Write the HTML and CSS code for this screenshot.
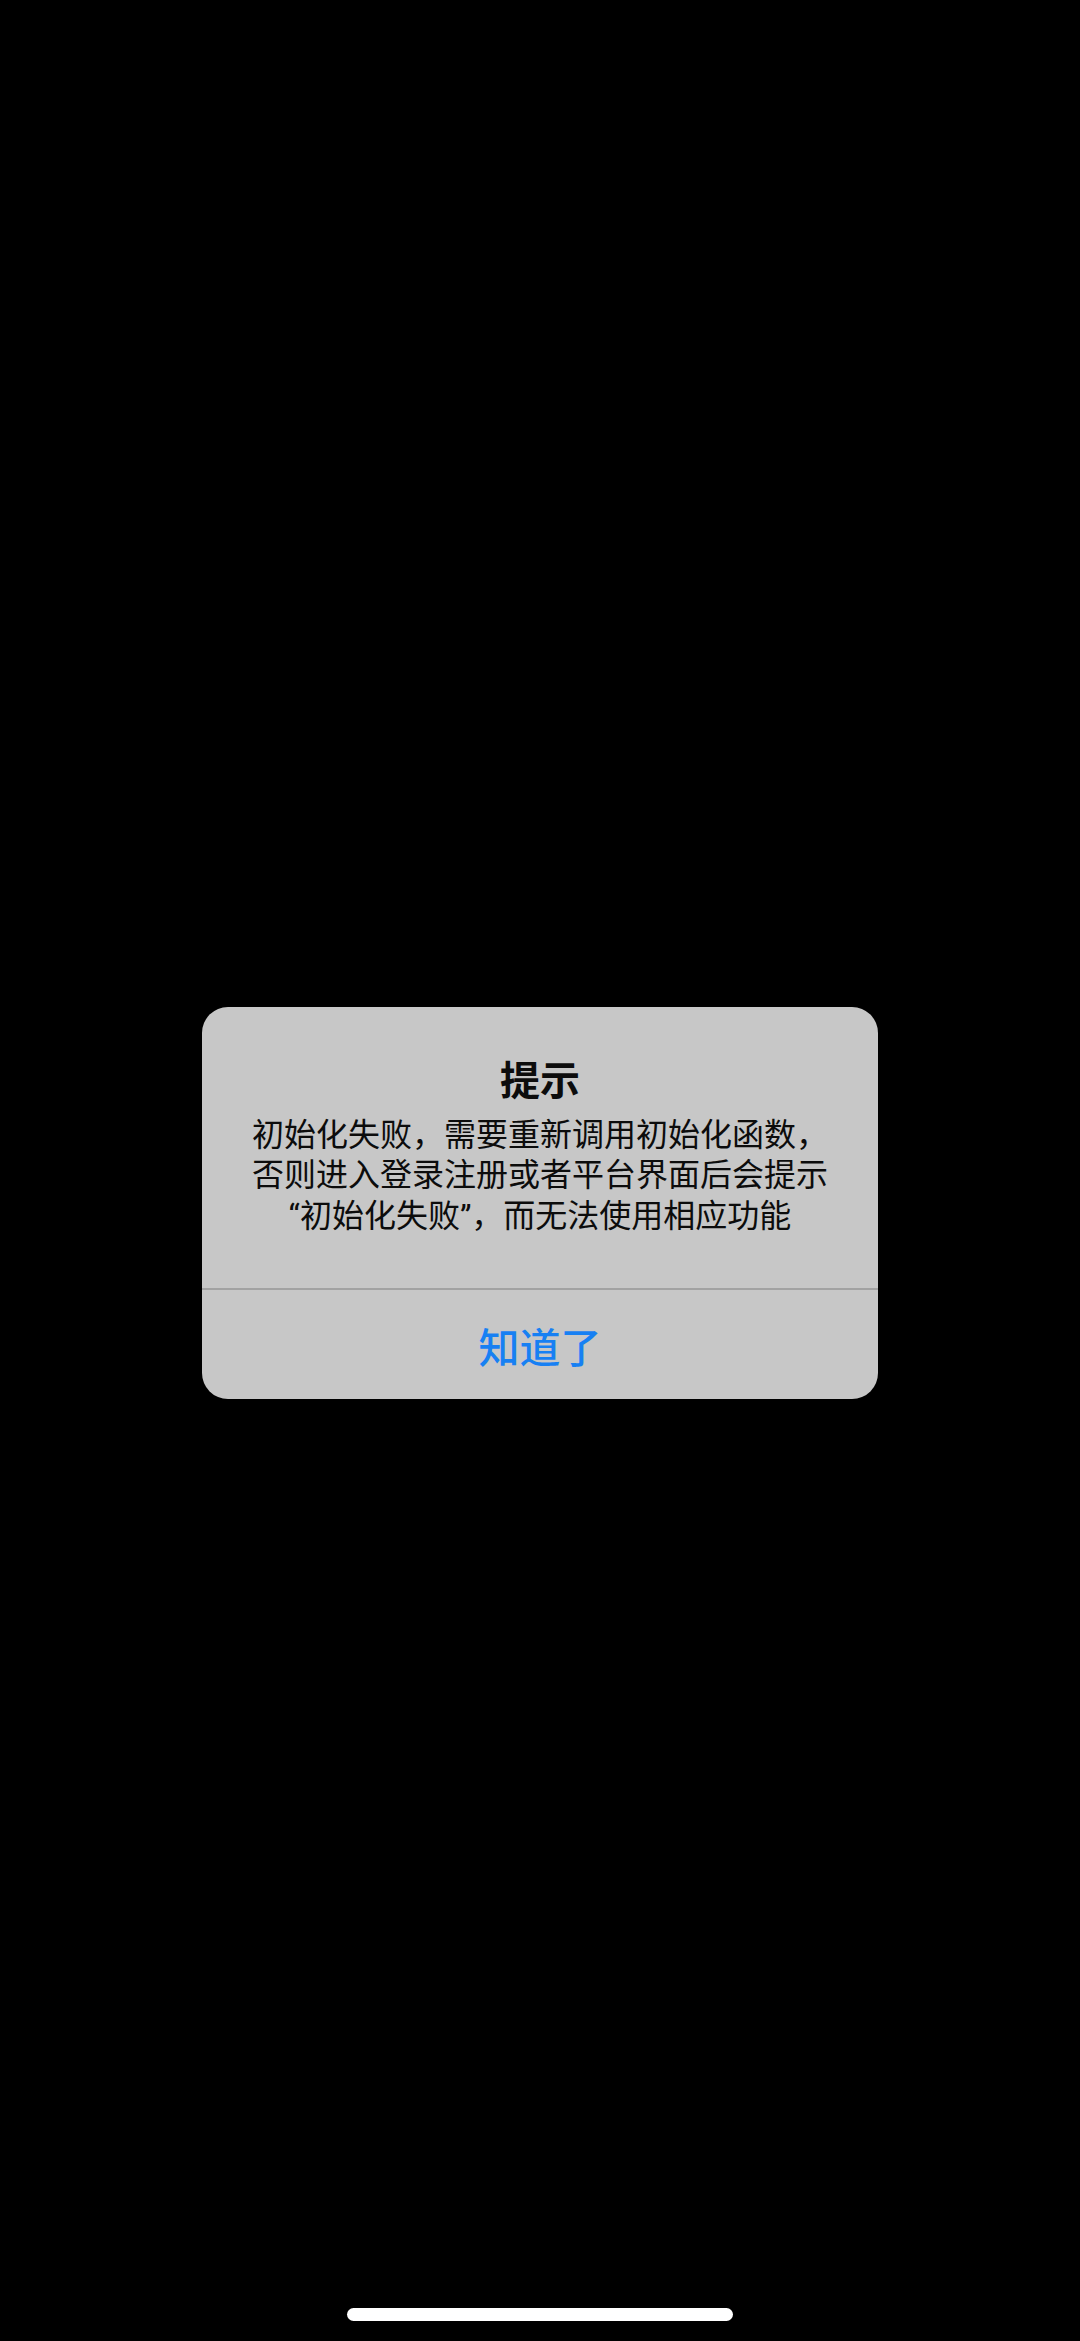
FILE: index.html
```html
<!DOCTYPE html>
<html lang="zh-CN">
<head>
    <meta charset="UTF-8">
    <meta name="viewport" content="width=device-width, initial-scale=1.0">
    <title>提示</title>
    <link rel="stylesheet" href="styles.css">
</head>
<body>
    <div class="screen">
        <div class="alert">
            <div class="alert-body">
                <h2 class="alert-title">提示</h2>
                <p class="alert-message">初始化失败，需要重新调用初始化函数，否则进入登录注册或者平台界面后会提示“初始化失败”，而无法使用相应功能</p>
            </div>
            <button class="alert-button" type="button">知道了</button>
        </div>
        <div class="home-indicator"></div>
    </div>
</body>
</html>
```

FILE: styles.css
```css
:root {
    --screen-bg: #000000;
    --alert-bg: #c7c7c7;
    --alert-line: #a2a2a2;
    --text-color: #0c0c0c;
    --accent-color: #1780f3;
}

* {
    margin: 0;
    padding: 0;
    box-sizing: border-box;
}

body {
    font-family: Roboto, "Noto Sans CJK SC", sans-serif;
    background: var(--screen-bg);
    color: var(--text-color);
    text-spacing-trim: space-all;
}

.screen {
    position: relative;
    min-height: 100vh;
    display: flex;
    justify-content: center;
    align-items: center;
    padding-top: 65px;
}

.alert {
    width: 676px;
    background: var(--alert-bg);
    border-radius: 26px;
    overflow: hidden;
    text-align: center;
}

.alert-body {
    padding: 51px 40px 52px;
    border-bottom: 2px solid var(--alert-line);
}

.alert-title {
    font-size: 40px;
    line-height: 48px;
    font-weight: 700;
    margin-bottom: 9px;
}

.alert-message {
    font-size: 32px;
    line-height: 40.5px;
}

.alert-button {
    display: block;
    width: 100%;
    height: 109px;
    border: none;
    background: transparent;
    font-family: inherit;
    font-size: 41px;
    font-weight: 500;
    color: var(--accent-color);
}

.home-indicator {
    position: absolute;
    left: 347px;
    bottom: 20px;
    width: 386px;
    height: 13px;
    border-radius: 7px;
    background: #ffffff;
}
```
